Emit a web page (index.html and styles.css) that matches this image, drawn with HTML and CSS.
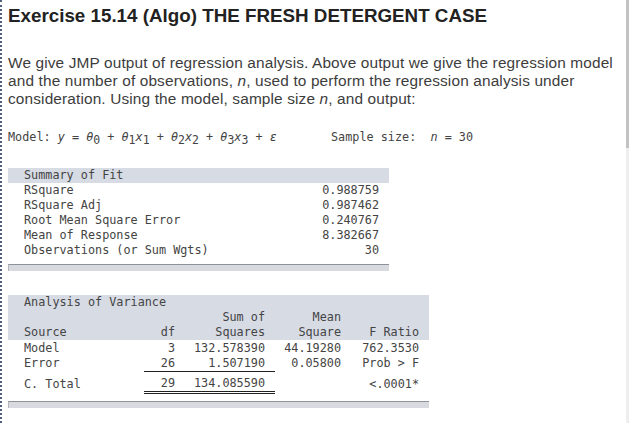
FILE: index.html
```html
<!DOCTYPE html>
<html>
<head>
<meta charset="utf-8">
<link rel="stylesheet" href="styles.css">
</head>
<body>
<div class="page">
  <h1 class="title">Exercise 15.14 (Algo) THE FRESH DETERGENT CASE</h1>
  <p class="intro">We give JMP output of regression analysis. Above output we give the regression model and the number of observations, <i>n</i>, used to perform the regression analysis under consideration. Using the model, sample size <i>n</i>, and output:</p>
  <div class="model"><span class="eq">Model: <i>y</i> = <i>θ</i><sub>0</sub> + <i>θ</i><sub>1</sub><i>x</i><sub>1</sub> + <i>θ</i><sub>2</sub><i>x</i><sub>2</sub> + <i>θ</i><sub>3</sub><i>x</i><sub>3</sub> + <i>ε</i></span><span class="sample">Sample size:  <i>n</i> = 30</span></div>

  <div class="report summary">
    <div class="band">Summary of Fit</div>
    <table class="grid">
      <tr><td class="lbl">RSquare</td><td class="num">0.988759</td></tr>
      <tr><td class="lbl">RSquare Adj</td><td class="num">0.987462</td></tr>
      <tr><td class="lbl">Root Mean Square Error</td><td class="num">0.240767</td></tr>
      <tr><td class="lbl">Mean of Response</td><td class="num">8.382667</td></tr>
      <tr><td class="lbl">Observations (or Sum Wgts)</td><td class="num">30</td></tr>
    </table>
    <div class="foot"></div>
  </div>

  <div class="report anova">
    <table class="grid">
      <thead>
        <tr><th class="lbl" colspan="5">Analysis of Variance</th></tr>
        <tr><th></th><th></th><th class="num">Sum of</th><th class="num">Mean</th><th></th></tr>
        <tr><th class="lbl">Source</th><th class="num">df</th><th class="num">Squares</th><th class="num">Square</th><th class="num">F Ratio</th></tr>
      </thead>
      <tbody>
        <tr><td class="lbl">Model</td><td class="num">3</td><td class="num">132.578390</td><td class="num">44.19280</td><td class="num">762.3530</td></tr>
        <tr><td class="lbl">Error</td><td class="num single">26</td><td class="num single">1.507190</td><td class="num">0.05800</td><td class="num">Prob &gt; F</td></tr>
        <tr class="total"><td class="lbl">C. Total</td><td class="num double">29</td><td class="num double">134.085590</td><td class="num"></td><td class="num">&lt;.0001*</td></tr>
      </tbody>
    </table>
    <div class="foot"></div>
  </div>
</div>
<div class="scrollbar"><div class="thumb"></div></div>
</body>
</html>
```
FILE: styles.css
```css
html, body {
  margin: 0;
  padding: 0;
  background: #ffffff;
  overflow: hidden;
}
.page {
  border-left: 2px dotted #4f6178;
  height: 423px;
  box-sizing: border-box;
  padding: 4px 0 0 6px;
}
.title {
  margin: 0;
  font-family: "Liberation Sans", Arial, sans-serif;
  font-weight: bold;
  font-size: 18.8px;
  line-height: 24px;
  color: #222222;
}
.intro {
  margin: 26px 0 0 0;
  width: 616px;
  font-family: "Liberation Sans", Arial, sans-serif;
  font-size: 15.4px;
  letter-spacing: 0.14px;
  line-height: 18px;
  color: #3d3d3d;
}
.model {
  margin-top: 21px;
  font-family: "DejaVu Sans Mono", monospace;
  font-size: 11.8px;
  line-height: 16px;
  color: #444444;
  white-space: pre;
  display: flex;
}
.model .eq {
  width: 323px;
}
.model i {
  font-style: italic;
}
.model sub {
  font-size: 11.5px;
  vertical-align: -3px;
  line-height: 0;
}
.report {
  font-family: "DejaVu Sans Mono", monospace;
  font-size: 11.8px;
  color: #444444;
}
.summary {
  margin-top: 23px;
  width: 381px;
}
.anova {
  margin-top: 24px;
  width: 421px;
}
.band {
  background: #d7dbe4;
  height: 15px;
  line-height: 15px;
  padding-left: 16px;
  white-space: pre;
}
.grid {
  border-collapse: collapse;
  width: 100%;
}
.grid td, .grid th {
  padding: 0;
  line-height: 15px;
  height: 15px;
  font-weight: normal;
  white-space: pre;
}
.grid .lbl {
  text-align: left;
  padding-left: 16px;
}
.grid .num {
  text-align: right;
  padding-right: 10px;
}
.summary .grid {
  margin-bottom: 6px;
}
.anova thead tr {
  background: #d7dbe4;
}
.anova tbody td:nth-child(2) { width: 31px; }
.anova tbody td:nth-child(3) { width: 80px; }
.anova tbody td:nth-child(4) { width: 66px; }
.anova tbody td:nth-child(5) { width: 68px; }
.anova tbody tr:first-child td {
  padding-top: 1px;
}
.grid td.single {
  border-bottom: 1px solid #222222;
}
.grid tr.total td {
  padding-top: 4px;
}
.grid td.double {
  border-bottom: 3px double #222222;
}
.anova .grid {
  margin-bottom: 7px;
}
.foot {
  height: 6px;
  background: #d8dadf;
  border-top: 1px solid #8e9299;
  border-left: 1px solid #b5b8be;
}
.scrollbar {
  position: absolute;
  top: 0;
  right: 1px;
  width: 3px;
  height: 423px;
  background: #eeeeee;
}
.thumb {
  height: 148px;
  background: #c2c2c2;
}
```
